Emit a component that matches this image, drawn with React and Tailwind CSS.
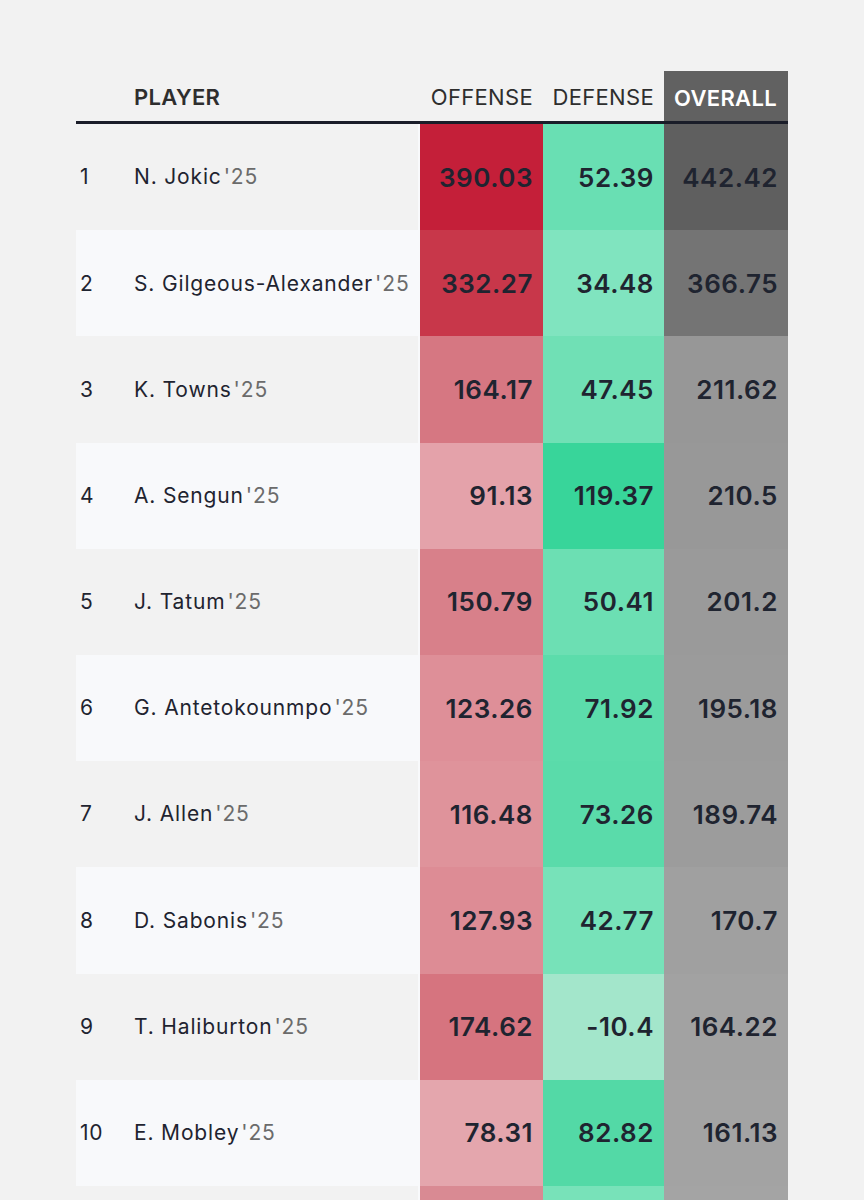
import React from 'react';

// colours read off the heat scale, one class per cell
const rows = [
    { rank: 1, name: 'N. Jokic', off: '390.03', offBg: 'bg-[#c41f39]', def: '52.39', defBg: 'bg-[#69dfb3]', all: '442.42', allBg: 'bg-[#5f5f5f]' },
    { rank: 2, name: 'S. Gilgeous-Alexander', off: '332.27', offBg: 'bg-[#c8374a]', def: '34.48', defBg: 'bg-[#80e4bf]', all: '366.75', allBg: 'bg-[#747474]' },
    { rank: 3, name: 'K. Towns', off: '164.17', offBg: 'bg-[#d67782]', def: '47.45', defBg: 'bg-[#70e0b5]', all: '211.62', allBg: 'bg-[#979797]' },
    { rank: 4, name: 'A. Sengun', off: '91.13', offBg: 'bg-[#e4a2aa]', def: '119.37', defBg: 'bg-[#38d59a]', all: '210.5', allBg: 'bg-[#989898]' },
    { rank: 5, name: 'J. Tatum', off: '150.79', offBg: 'bg-[#d8808a]', def: '50.41', defBg: 'bg-[#6cdfb3]', all: '201.2', allBg: 'bg-[#9a9a9a]' },
    { rank: 6, name: 'G. Antetokounmpo', off: '123.26', offBg: 'bg-[#de8f98]', def: '71.92', defBg: 'bg-[#5cdcab]', all: '195.18', allBg: 'bg-[#9b9b9b]' },
    { rank: 7, name: 'J. Allen', off: '116.48', offBg: 'bg-[#df939b]', def: '73.26', defBg: 'bg-[#5adbaa]', all: '189.74', allBg: 'bg-[#9c9c9c]' },
    { rank: 8, name: 'D. Sabonis', off: '127.93', offBg: 'bg-[#dd8c95]', def: '42.77', defBg: 'bg-[#77e2b9]', all: '170.7', allBg: 'bg-[#a0a0a0]' },
    { rank: 9, name: 'T. Haliburton', off: '174.62', offBg: 'bg-[#d6747f]', def: '-10.4', defBg: 'bg-[#a3e6cb]', all: '164.22', allBg: 'bg-[#a2a2a2]' },
    { rank: 10, name: 'E. Mobley', off: '78.31', offBg: 'bg-[#e4a6ad]', def: '82.82', defBg: 'bg-[#53d9a6]', all: '161.13', allBg: 'bg-[#a3a3a3]' },
];

const Row = ({ row, light }) => {
    const bg = light ? 'bg-[#f8f9fb]' : 'bg-[#f2f2f2]';
    return (
        <div className={`grid grid-cols-[58px_286px_123px_121px_124px] h-[106.2px] ${bg}`}>
            <div className="flex items-center pl-1 text-[21px] tracking-[0.03em] text-[#1f2430]">{row.rank}</div>
            <div className="flex items-center border-r-2 border-[#f8f9fb] text-[21px] tracking-[0.04em] text-[#1f2430] whitespace-nowrap">
                {row.name}
                <span className="ml-[2px] text-[#6b6b6b]">'25</span>
            </div>
            <div className={`flex items-center justify-end pr-[10px] text-[26px] tracking-[0.02em] font-semibold text-[#1f2430] ${row.offBg}`}>{row.off}</div>
            <div className={`flex items-center justify-end pr-[10px] text-[26px] tracking-[0.02em] font-semibold text-[#1f2430] ${row.defBg}`}>{row.def}</div>
            <div className={`flex items-center justify-end pr-[10px] text-[26px] tracking-[0.02em] font-semibold text-[#1f2430] ${row.allBg}`}>{row.all}</div>
        </div>
    );
};

export default function App() {
    return (
        <div className="min-h-screen bg-[#f2f2f2] pt-[70px] px-[76px] font-['Inter',sans-serif]">
            <div className="w-[712px]">
                <div className="grid grid-cols-[58px_286px_123px_121px_124px] h-[54px] border-b-[3px] border-[#1a1d29] text-[22px] tracking-[0.015em]">
                    <div />
                    <div className="flex items-center pt-1 font-semibold text-[#2e2e2e]">PLAYER</div>
                    <div className="flex items-center justify-end pt-1 pr-[10px] text-[#2e2e2e]">OFFENSE</div>
                    <div className="flex items-center justify-end pt-1 pr-[10px] text-[#2e2e2e]">DEFENSE</div>
                    <div className="flex items-center justify-end pt-1 pr-[11px] mt-[1px] bg-[#616161] font-semibold text-white">OVERALL</div>
                </div>
                {rows.map((row, i) => (
                    <Row key={row.rank} row={row} light={i % 2 === 1} />
                ))}
                {/* next row, only its top edge is on screen */}
                <div className="grid grid-cols-[58px_286px_123px_121px_124px] h-[106px] bg-[#f2f2f2]">
                    <div />
                    <div className="border-r-2 border-[#f8f9fb]" />
                    <div className="bg-[#d98a93]" />
                    <div className="bg-[#78e2b9]" />
                    <div className="bg-[#a4a4a4]" />
                </div>
            </div>
        </div>
    );
}
